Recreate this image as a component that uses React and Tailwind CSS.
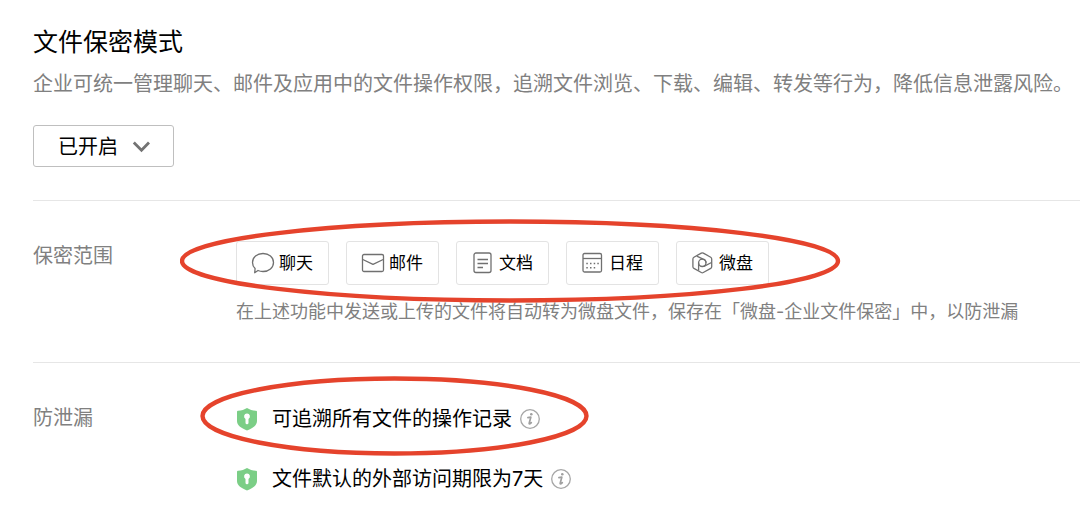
import React from "react";

function ChatIcon() {
  return (
    <svg className="h-6 w-6 shrink-0" viewBox="0 0 24 24" fill="none" stroke="#707070" strokeWidth="1.3" strokeLinejoin="round" aria-hidden="true">
      <path d="M12 2.500c5.900 0 10.500 3.900 10.500 9s-4.600 9-10.500 9c-1.800 0-3.500-.3-5-1L3.700 21.700l.4-4.200C2.400 15.900 1.500 13.800 1.500 11.500c0-5.100 4.600-9 10.500-9z" />
    </svg>
  );
}

function MailIcon() {
  return (
    <svg className="h-6 w-6 shrink-0" viewBox="0 0 24 24" fill="none" stroke="#707070" strokeWidth="1.3" strokeLinejoin="round" aria-hidden="true">
      <rect x="1.500" y="3.500" width="21" height="17" rx="1.500" />
      <path d="M1.800 8.500l10.200 4.900 10.200-4.900" />
    </svg>
  );
}

function DocIcon() {
  return (
    <svg className="h-6 w-6 shrink-0" viewBox="0 0 24 24" fill="none" stroke="#707070" strokeWidth="1.3" aria-hidden="true">
      <rect x="3" y="2" width="17" height="19.500" rx="2" />
      <path d="M6.500 8.500h10.500M6.500 12.500h10.500M6.500 16.500h5.500" />
    </svg>
  );
}

function CalendarIcon() {
  return (
    <svg className="h-6 w-6 shrink-0" viewBox="0 0 24 24" fill="none" stroke="#707070" strokeWidth="1.3" aria-hidden="true">
      <rect x="2" y="2.500" width="18.500" height="18.500" rx="1.500" />
      <path d="M2 7.500h18.500" />
      <path d="M5.300 12.500h1.500M9 12.500h1.500M12.700 12.500h1.500M16.300 12.500h1.500M5.300 16.700h1.500M9 16.700h1.500M12.700 16.700h1.500" strokeWidth="1.500" />
    </svg>
  );
}

function DriveIcon() {
  return (
    <svg className="h-6 w-6 shrink-0" viewBox="0 0 24 24" fill="none" stroke="#707070" strokeWidth="1.300" strokeLinejoin="round" aria-hidden="true">
      <path d="M10.300 2.100a2 2 0 0 1 2 0l7.400 4.100a2 2 0 0 1 1 1.700v7.800a2 2 0 0 1-1 1.700l-7.400 4.100a2 2 0 0 1-2 0l-7.400-4.100a2 2 0 0 1-1-1.700v-7.800a2 2 0 0 1 1-1.700z" />
      <circle cx="11.300" cy="11.800" r="3.700" />
      <path d="M7.600 11.800v7.800M5.800 5.200l6.300 2.900c1.800.5 2.900 1.900 2.900 3.700M20.500 11.500l-7.500 3.900" />
    </svg>
  );
}

function ShieldIcon() {
  return (
    <svg className="h-6 w-[22px] shrink-0" viewBox="0 0 22 24" aria-hidden="true">
      <path d="M11 1c2.600 1.600 5.500 2.600 9 2.800.7.100 1 .4 1 1V14c0 4.200-4 7.200-10 9.400C5 21.200 1 18.200 1 14V4.800c0-.6.3-.9 1-1C5.500 3.600 8.400 2.600 11 1z" fill="#7bce86" />
      <path d="M11 6.500a2.900 2.900 0 0 1 1.500 5.400v3.900a1.500 1.500 0 0 1-3 0v-3.900A2.900 2.900 0 0 1 11 6.500z" fill="#fff" />
    </svg>
  );
}

function InfoButton({ label }) {
  return (
    <button type="button" aria-label={label} className="h-5 w-5 shrink-0">
      <svg viewBox="0 0 20 20" fill="none" aria-hidden="true">
        <circle cx="10" cy="10" r="9.300" stroke="#a6a6a6" strokeWidth="1.300" />
        <circle cx="11.300" cy="5.300" r="1.300" fill="#a0a0a0" />
        <path d="M7.900 8.700l2.900-.5-1.600 6c-.3 1.100.8.900 2.100-.5" stroke="#a0a0a0" strokeWidth="1.700" strokeLinecap="round" strokeLinejoin="round" />
      </svg>
    </button>
  );
}

const scopes = [
  { name: "聊天", Icon: ChatIcon },
  { name: "邮件", Icon: MailIcon },
  { name: "文档", Icon: DocIcon },
  { name: "日程", Icon: CalendarIcon },
  { name: "微盘", Icon: DriveIcon },
];

const protections = ["可追溯所有文件的操作记录", "文件默认的外部访问期限为7天"];

function Section({ title, children }) {
  return (
    <section className="grid grid-cols-[203px_1fr] border-t border-[#e6e6e6] pt-10 pb-9">
      <h2 className="text-[20px] leading-[30px] text-[#808080]">{title}</h2>
      <div className="relative">{children}</div>
    </section>
  );
}

export default function App() {
  return (
    <main
      lang="zh-CN"
      className="overflow-hidden bg-white pt-6 pl-[33px] font-['Inter','Noto_Sans_CJK_SC',sans-serif] text-black"
    >
      <header className="pb-[33px]">
        <h1 className="text-[25px] leading-9">文件保密模式</h1>
        <p className="mt-2.5 text-[20px] leading-7 text-[#808080]">
          企业可统一管理聊天、邮件及应用中的文件操作权限，追溯文件浏览、下载、编辑、转发等行为，降低信息泄露风险。
        </p>
        <div className="mt-[27px] grid w-[141px] items-center">
          <select
            aria-label="文件保密模式"
            className="col-start-1 row-start-1 h-[42px] w-full appearance-none rounded-[3px] border border-[#bfbfbf] bg-white pt-0.5 pl-6 text-[20px]"
          >
            <option>已开启</option>
            <option>已关闭</option>
          </select>
          <svg className="pointer-events-none col-start-1 row-start-1 mr-6 h-[18px] w-[18px] justify-self-end" viewBox="0 0 18 18" fill="none" stroke="#737373" strokeWidth="2.800" aria-hidden="true">
            <path d="M1.800 5.500L9.500 13.200 17 5.500" />
          </svg>
        </div>
      </header>

      <Section title="保密范围">
        <ul className="flex gap-[17px]">
          {scopes.map(({ name, Icon }) => (
            <li key={name} className="flex h-11 w-[93px] items-center gap-1 rounded-[3px] border border-[#e3e3e3] pl-3.5 text-[17px]">
              <Icon />
              <span className="pt-0.5">{name}</span>
            </li>
          ))}
        </ul>
        <p className="mt-[13px] text-[18px] leading-7 text-[#808080]">
          在上述功能中发送或上传的文件将自动转为微盘文件，保存在「微盘-企业文件保密」中，以防泄漏
        </p>
        <svg className="pointer-events-none absolute -top-6 -left-14 h-[86px] w-[662px]" viewBox="0 0 662 86" fill="none" aria-hidden="true">
          <ellipse cx="330" cy="44" rx="328" ry="39.500" stroke="#e5432c" strokeWidth="4.400" />
        </svg>
      </Section>

      <Section title="防泄漏">
        <ul className="flex flex-col gap-7 text-[20px] leading-8">
          {protections.map((text) => (
            <li key={text} className="flex items-center">
              <ShieldIcon />
              <span className="mr-2 ml-3.5">{text}</span>
              <InfoButton label={`${text}说明`} />
            </li>
          ))}
        </ul>
        <svg className="pointer-events-none absolute -top-7 -left-9 h-[82px] w-[390px]" viewBox="0 0 390 82" fill="none" aria-hidden="true">
          <ellipse cx="194.500" cy="41" rx="192" ry="37.500" stroke="#e5432c" strokeWidth="4.400" />
        </svg>
      </Section>
    </main>
  );
}
